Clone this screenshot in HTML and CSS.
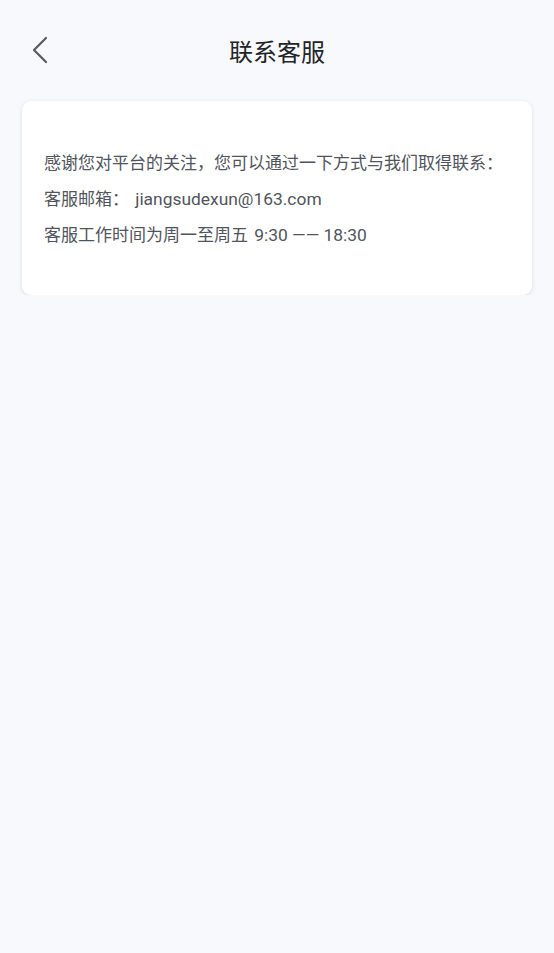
FILE: index.html
```html
<!DOCTYPE html>
<html>
<head>
    <meta charset="utf-8">
    <title>联系客服</title>
    <link rel="stylesheet" href="styles.css">
</head>
<body>
    <div class="header">
        <a class="back" href="#">
            <svg width="16" height="28" viewBox="0 0 16 28">
                <path d="M14 2 L2 14 L14 26" fill="none" stroke="#555a63" stroke-width="2.2" stroke-linecap="round" stroke-linejoin="round"/>
            </svg>
        </a>
        <h1 class="title">联系客服</h1>
    </div>

    <div class="card">
        <p>感谢您对平台的关注，您可以通过一下方式与我们取得联系：</p>
        <p>客服邮箱： <span class="en">jiangsudexun@163.com</span></p>
        <p>客服工作时间为周一至周五 <span class="en">9:30 —— 18:30</span></p>
    </div>
</body>
</html>
```

FILE: styles.css
```css
body {
    margin: 0;
    background: #f8f9fc;
    font-family: Roboto, "Noto Sans CJK SC", sans-serif;
}

.header {
    position: relative;
    height: 101px;
    display: flex;
    justify-content: center;
    align-items: center;
}

.back {
    position: absolute;
    left: 32px;
    top: 36px;
    display: block;
    line-height: 0;
}

.title {
    margin: 0;
    font-size: 24px;
    font-weight: normal;
    color: #222428;
}

.card {
    margin: 0 22px 0 22px;
    padding: 44px 22px 42px;
    background: #fff;
    border-radius: 9px;
    box-shadow: 0 1px 4px rgba(0, 0, 0, 0.12);
}

.card p {
    margin: 0;
    font-size: 17px;
    line-height: 36px;
    color: #50545c;
}

.card .en {
    margin-left: 2px;
    font-size: 17.4px;
}
```
